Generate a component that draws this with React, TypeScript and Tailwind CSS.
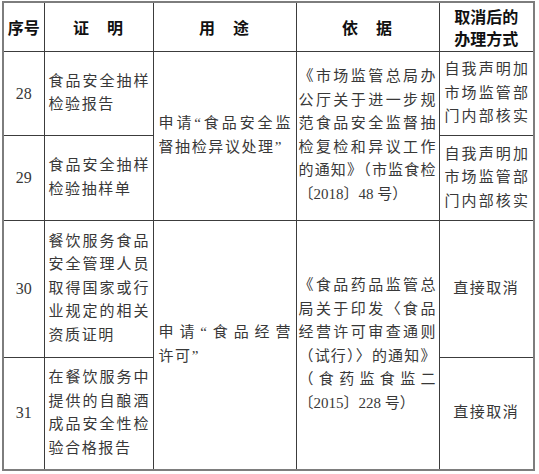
const body = "font-['Liberation_Serif','Noto_Sans_CJK_SC',serif] text-[15px] leading-[23.5px] text-[#383838]";
const head = "font-['Noto_Sans_CJK_SC',sans-serif] text-[16px] font-bold text-[#111] leading-[22px]";
const cell = "border border-[#3c3c3c] p-0 align-middle";

function Lines({ lines, lastFull = false }: { lines: string[]; lastFull?: boolean }) {
  return (
    <div>
      {lines.map((l, i) => {
        const full = i < lines.length - 1 || lastFull;
        return (
          <div
            key={i}
            className={
              full
                ? "whitespace-nowrap text-justify [text-align-last:justify]"
                : "whitespace-nowrap tracking-[1.6px]"
            }
          >
            {l}
          </div>
        );
      })}
    </div>
  );
}

// document number line, digits set tight in the serif face
function DocNo({ year, num }: { year: string; num: string }) {
  return (
    <div className="whitespace-nowrap">
      〔{year}〕{num} 号）
    </div>
  );
}

export default function App() {
  return (
    <div className="pl-[2px] pt-[1px] bg-white">
      <table className="w-[533px] table-fixed border-collapse border-2 border-[#7d7d7d]">
        <colgroup>
          <col className="w-[41px]" />
          <col className="w-[109px]" />
          <col className="w-[143px]" />
          <col className="w-[143px]" />
          <col className="w-[95px]" />
        </colgroup>
        <tbody>
          <tr className="h-[49px]">
            <td className={`${cell} ${head} text-center`}>序号</td>
            <td className={`${cell} ${head} text-center tracking-[1px]`}>证　明</td>
            <td className={`${cell} ${head} text-center tracking-[1px]`}>用　途</td>
            <td className={`${cell} ${head} text-center tracking-[1px]`}>依　据</td>
            <td className={`${cell} ${head} text-center`}>
              <div>取消后的</div>
              <div>办理方式</div>
            </td>
          </tr>
          <tr className={`h-[84.5px] ${body}`}>
            <td className={`${cell} text-center text-[16px]`}>28</td>
            <td className={`${cell} px-[4px]`}>
              <Lines lines={["食品安全抽样", "检验报告"]} />
            </td>
            <td rowSpan={2} className={`${cell} pl-[5px] pr-[5px]`}>
              <Lines lines={["申请“食品安全监", "督抽检异议处理”"]} />
            </td>
            <td rowSpan={2} className={`${cell} pl-[2px] pr-[3px]`}>
              <Lines
                lines={[
                  "《市场监管总局办",
                  "公厅关于进一步规",
                  "范食品安全监督抽",
                  "检复检和异议工作",
                  "的通知》（市监食检",
                ]}
                lastFull
              />
              <DocNo year="2018" num="48" />
            </td>
            <td className={`${cell} px-[5px]`}>
              <Lines lines={["自我声明加", "市场监管部", "门内部核实"]} lastFull />
            </td>
          </tr>
          <tr className={`h-[84.5px] ${body}`}>
            <td className={`${cell} text-center text-[16px]`}>29</td>
            <td className={`${cell} px-[4px]`}>
              <Lines lines={["食品安全抽样", "检验抽样单"]} />
            </td>
            <td className={`${cell} px-[5px]`}>
              <Lines lines={["自我声明加", "市场监管部", "门内部核实"]} lastFull />
            </td>
          </tr>
          <tr className={`h-[137px] ${body}`}>
            <td className={`${cell} text-center text-[16px]`}>30</td>
            <td className={`${cell} px-[4px]`}>
              <Lines lines={["餐饮服务食品", "安全管理人员", "取得国家或行", "业规定的相关", "资质证明"]} />
            </td>
            <td rowSpan={2} className={`${cell} pl-[5px] pr-[5px]`}>
              <Lines lines={["申请“食品经营", "许可”"]} />
            </td>
            <td rowSpan={2} className={`${cell} pl-[2px] pr-[3px]`}>
              <Lines
                lines={[
                  "《食品药品监管总",
                  "局关于印发〈食品",
                  "经营许可审查通则",
                  "（试行）〉的通知》",
                  "（食药监食监二",
                ]}
                lastFull
              />
              <DocNo year="2015" num="228" />
            </td>
            <td className={`${cell} text-center tracking-[1.5px]`}>直接取消</td>
          </tr>
          <tr className={`h-[112.5px] ${body}`}>
            <td className={`${cell} text-center text-[16px]`}>31</td>
            <td className={`${cell} px-[4px]`}>
              <Lines lines={["在餐饮服务中", "提供的自酿酒", "成品安全性检", "验合格报告"]} />
            </td>
            <td className={`${cell} text-center tracking-[1.5px]`}>直接取消</td>
          </tr>
        </tbody>
      </table>
    </div>
  );
}
